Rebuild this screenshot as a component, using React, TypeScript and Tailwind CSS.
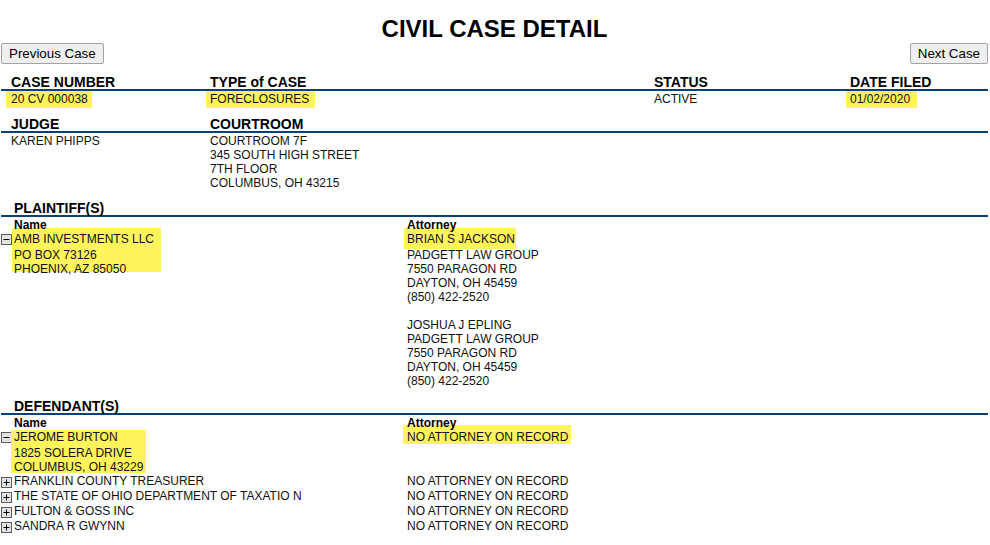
import React from "react";

const HL = "bg-[#fff45c]";

function Box({ plus }: { plus?: boolean }) {
  return (
    <svg width="11" height="11" viewBox="0 0 11 11" className="block shrink-0">
      <rect x="0.5" y="0.5" width="10" height="10" fill="#e3e3e3" stroke="#5c5c5c" />
      <line x1="2.5" y1="5.5" x2="8.5" y2="5.5" stroke="#000" strokeWidth="1" />
      {plus && <line x1="5.5" y1="2.5" x2="5.5" y2="8.5" stroke="#000" strokeWidth="1" />}
    </svg>
  );
}

const LINE = "border-b-2 border-[#0d3f7c]";

function Btn({ children }: { children: React.ReactNode }) {
  return (
    <button className="h-[21px] px-[7px] py-[2px] border border-[#a3a3a3] rounded-[2px] bg-[#efefef] text-[13.33px] leading-[15px] text-black">
      {children}
    </button>
  );
}

export default function App() {
  const others = [
    "FRANKLIN COUNTY TREASURER",
    "THE STATE OF OHIO DEPARTMENT OF TAXATIO N",
    "FULTON & GOSS INC",
    "SANDRA R GWYNN",
  ];
  return (
    <div className="w-[990px] h-[545px] overflow-hidden bg-white pl-[1px] pr-[2px] font-['Liberation_Sans',Arial,sans-serif] text-[#111]">
      <div className="pt-[15px]">
        <h1 className="text-center text-[24px] leading-[28px] font-bold text-black">CIVIL CASE DETAIL</h1>
      </div>
      <div className="flex justify-between">
        <Btn>Previous Case</Btn>
        <Btn>Next Case</Btn>
      </div>

      {/* Row 1 */}
      <div className="mt-[11px]">
        <div className={`relative z-10 flex ${LINE} text-[14px] leading-[14px] font-bold text-black`}>
          <div className="w-[209px] pl-[10px]">CASE NUMBER</div>
          <div className="w-[444px]">TYPE of CASE</div>
          <div className="w-[196px]">STATUS</div>
          <div className="flex-1">DATE FILED</div>
        </div>
        <div className="flex pt-[1px] text-[12px] leading-[14px]">
          <div className="w-[209px] pl-[10px]">
            <span className={`inline-block ${HL} -ml-[5px] pl-[5px] pr-[4px] -mr-[4px] -mt-[1px] pt-[1px] pb-[2px] -mb-[2px]`}>20 CV 000038</span>
          </div>
          <div className="w-[444px]">
            <span className={`inline-block ${HL} -ml-[4px] pl-[4px] pr-[6px] -mr-[6px] -mt-[1px] pt-[1px] pb-[2px] -mb-[2px]`}>FORECLOSURES</span>
          </div>
          <div className="w-[196px]">ACTIVE</div>
          <div className="flex-1">
            <span className={`inline-block ${HL} -ml-[4px] pl-[4px] pr-[7px] -mr-[7px] -mt-[1px] pt-[1px] pb-[2px] -mb-[2px]`}>01/02/2020</span>
          </div>
        </div>
      </div>

      {/* Row 2 */}
      <div className="mt-[11px]">
        <div className={`relative z-10 flex ${LINE} text-[14px] leading-[14px] font-bold text-black`}>
          <div className="w-[209px] pl-[10px]">JUDGE</div>
          <div className="w-[444px]">COURTROOM</div>
          <div className="w-[196px]"></div>
          <div className="flex-1"></div>
        </div>
        <div className="flex pt-[1px] text-[12px] leading-[14px]">
          <div className="w-[209px] pl-[10px]">KAREN PHIPPS</div>
          <div className="w-[444px]">
            <div>COURTROOM 7F</div>
            <div>345 SOUTH HIGH STREET</div>
            <div>7TH FLOOR</div>
            <div>COLUMBUS, OH 43215</div>
          </div>
        </div>
      </div>

      {/* Plaintiffs */}
      <div className="mt-[11px]">
        <div className={`${LINE} pl-[13px] text-[14px] leading-[14px] font-bold text-black`}>PLAINTIFF(S)</div>
        <div className="relative z-10 flex pt-[1px] text-[12px] leading-[14px] font-bold text-black">
          <div className="w-[406px] pl-[13px]">Name</div>
          <div className="flex-1">Attorney</div>
        </div>
        <div className="flex text-[12px] leading-[14px]">
          <div className="w-[406px] flex items-start">
            <div className="mt-[2px]"><Box /></div>
            <div className={`${HL} -mt-[4px] pt-[4px] h-[44px] pl-[2px] pr-[7px]`}>
              <div>AMB INVESTMENTS LLC</div>
              <div className="mt-[2px]">PO BOX 73126</div>
              <div>PHOENIX, AZ 85050</div>
            </div>
          </div>
          <div className="flex-1">
            <div className={`w-fit ${HL} -ml-[3px] pl-[3px] pr-[1px] -mt-[4px] pt-[4px] pb-[3px] -mb-[3px]`}>BRIAN S JACKSON</div>
            <div className="mt-[2px]">
              <div>PADGETT LAW GROUP</div>
              <div>7550 PARAGON RD</div>
              <div>DAYTON, OH 45459</div>
              <div>(850) 422-2520</div>
            </div>
            <div className="mt-[14px]">
              <div>JOSHUA J EPLING</div>
              <div>PADGETT LAW GROUP</div>
              <div>7550 PARAGON RD</div>
              <div>DAYTON, OH 45459</div>
              <div>(850) 422-2520</div>
            </div>
          </div>
        </div>
      </div>

      {/* Defendants */}
      <div className="mt-[11px]">
        <div className={`${LINE} pl-[13px] text-[14px] leading-[14px] font-bold text-black`}>DEFENDANT(S)</div>
        <div className="relative z-10 flex pt-[1px] text-[12px] leading-[14px] font-bold text-black">
          <div className="w-[406px] pl-[13px]">Name</div>
          <div className="flex-1">Attorney</div>
        </div>
        <div className="flex h-[44px] text-[12px] leading-[14px]">
          <div className="w-[406px] flex items-start">
            <div className="mt-[2px]"><Box /></div>
            <div className={`${HL} -ml-[1px] pl-[3px] pr-[3px] h-[43px]`}>
              <div>JEROME BURTON</div>
              <div className="mt-[2px]">1825 SOLERA DRIVE</div>
              <div>COLUMBUS, OH 43229</div>
            </div>
          </div>
          <div className="flex-1">
            <div className={`w-fit ${HL} -ml-[4px] pl-[4px] pr-[3px] -mt-[5px] pt-[5px]`}>NO ATTORNEY ON RECORD</div>
          </div>
        </div>
        {others.map((n) => (
          <div key={n} className="flex h-[15px] text-[12px] leading-[15px]">
            <div className="w-[406px] flex items-start">
              <div className="mt-[3px]"><Box plus /></div>
              <div className="pl-[2px]">{n}</div>
            </div>
            <div className="flex-1">NO ATTORNEY ON RECORD</div>
          </div>
        ))}
      </div>
    </div>
  );
}
